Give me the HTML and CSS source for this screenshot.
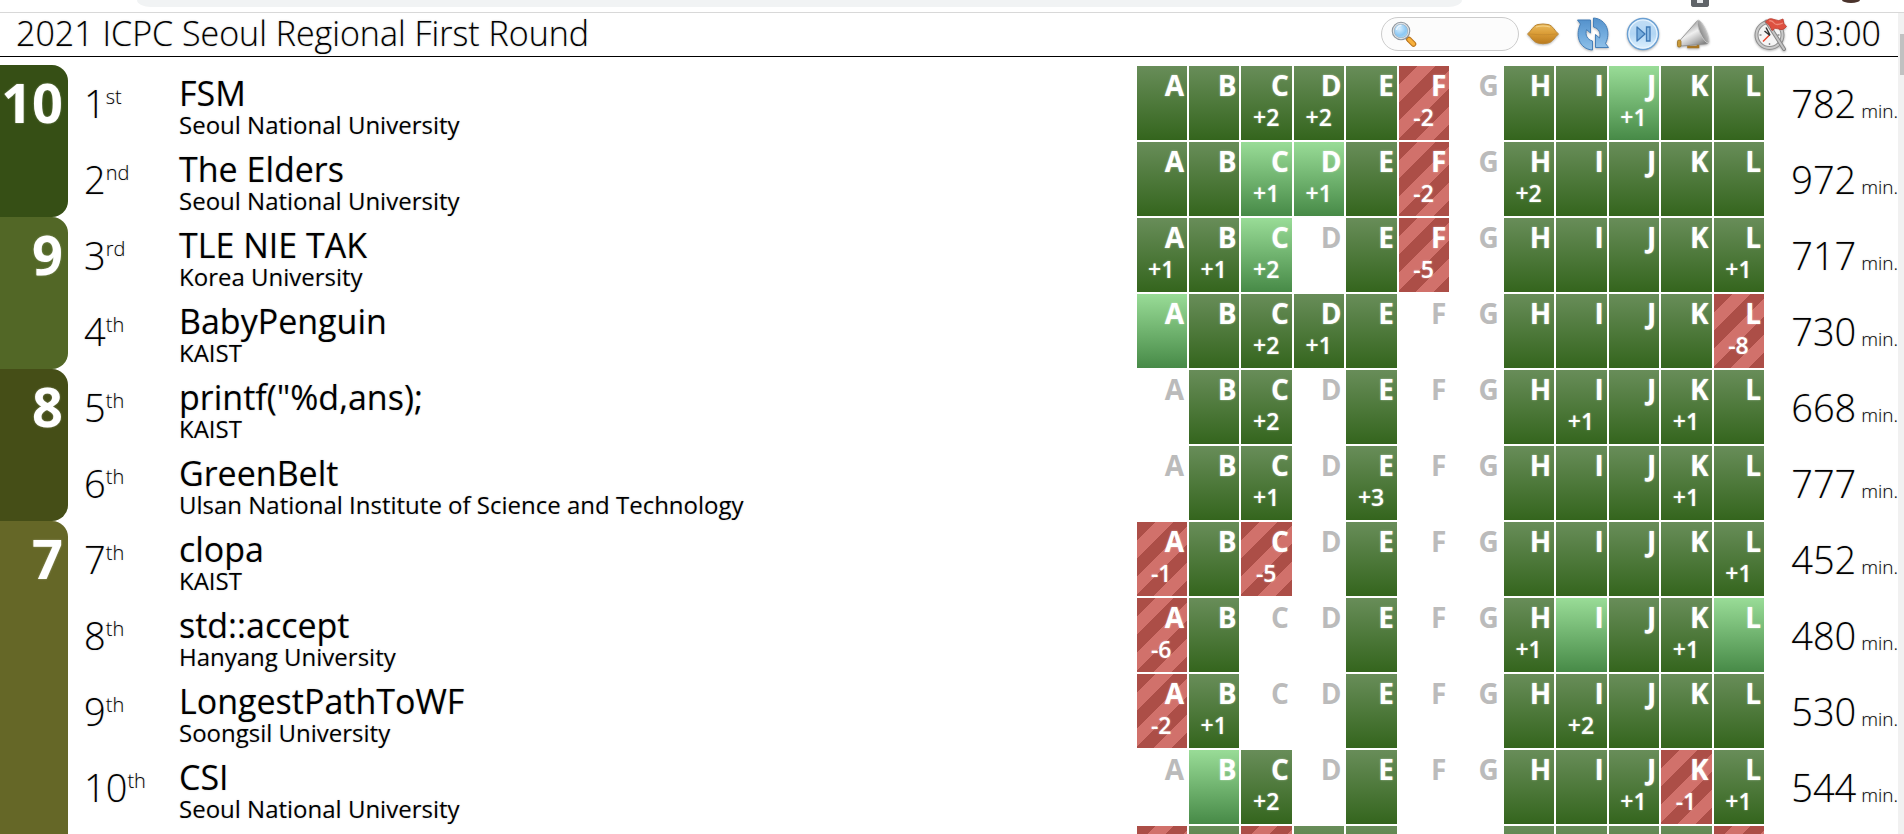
FILE: index.html
```
<!DOCTYPE html>
<html lang="en">
<head>
<meta charset="utf-8">
<title>2021 ICPC Seoul Regional First Round</title>
<link rel="stylesheet" href="styles.css">
</head>
<body>
<div class="browser-edge">
  <div class="omnibox"></div>
  <div class="extension"></div>
  <div class="avatar"></div>
</div>
<div class="viewport">
<main class="page">
<header class="topbar">
  <h1 class="title">2021 ICPC Seoul Regional First Round</h1>
  <label class="search">
    <svg width="26" height="26" viewBox="0 0 26 26" aria-hidden="true">
      <defs><radialGradient id="lens" cx=".4" cy=".35" r=".7"><stop offset="0" stop-color="#d8efff"/><stop offset=".6" stop-color="#8cc8f4"/><stop offset="1" stop-color="#b5def8"/></radialGradient></defs>
      <path d="M15 16l3 3" stroke="#8d8d8d" stroke-width="4"/>
      <path d="M18 18.500l4.500 4.500" stroke="#b9731a" stroke-width="5.500" stroke-linecap="round"/>
      <path d="M18 18.500l4.500 4.500" stroke="#f7b03c" stroke-width="3.500" stroke-linecap="round"/>
      <circle cx="10" cy="10" r="8" fill="url(#lens)" stroke="#8f979f" stroke-width="2.600"/>
      <circle cx="10" cy="10" r="7.600" fill="none" stroke="#dfe3e7" stroke-width="1.200"/>
      <path d="M5.500 9a5 5 0 0 1 5-4.500" fill="none" stroke="#fff" stroke-width="1.500" opacity=".7"/>
    </svg>
    <input class="search-input" type="text" aria-label="Search teams">
  </label>
  <div class="tools">
    <button class="tool" type="button" aria-label="Award">
      <svg width="34" height="34" viewBox="0 0 34 34" aria-hidden="true">
        <defs><linearGradient id="gold" x1="0" y1="0" x2="0" y2="1"><stop offset="0" stop-color="#ecbc5e"/><stop offset=".5" stop-color="#d99b35"/><stop offset="1" stop-color="#b97a1e"/></linearGradient></defs>
        <path d="M1.500 17C5 14.500 7 8.500 12 7.500Q17 6.500 22 7.500C27 8.500 29 14.500 32.500 17C29 19.500 27 25 22 26Q17 27.500 12 26C7 25 5 19.500 1.500 17Z" fill="url(#gold)" stroke="#b98430"/>
        <path d="M3 17Q17 18.500 31 17" fill="none" stroke="#c98e31" stroke-width="1.200"/>
        <path d="M10 10Q17 8 24 10" fill="none" stroke="#f3d28a" stroke-width="1.200"/>
      </svg>
    </button>
    <button class="tool" type="button" aria-label="Reload">
      <svg width="34" height="34" viewBox="0 0 34 34" aria-hidden="true">
        <defs><linearGradient id="blue" x1="0" y1="0" x2="0" y2="1"><stop offset="0" stop-color="#5592cc"/><stop offset=".5" stop-color="#6fa9dc"/><stop offset="1" stop-color="#8fc0e8"/></linearGradient></defs>
        <path d="M1.500 3H14.500V16L10.500 12.500C9 18 11 22.500 16.500 24V33C3 32 -1 18 4.500 7Z" fill="url(#blue)" stroke="#457fb8"/>
        <path d="M32.500 30.500H19.500V17.500L23.500 21C25 16 23 11.500 17.500 10V1C31 2 35 16 29.500 26.500Z" fill="url(#blue)" stroke="#457fb8"/>
      </svg>
    </button>
    <button class="tool" type="button" aria-label="Next">
      <svg width="34" height="34" viewBox="0 0 34 34" aria-hidden="true">
        <defs><linearGradient id="disc" x1="0" y1="0" x2="0" y2="1"><stop offset="0" stop-color="#c3def5"/><stop offset=".5" stop-color="#b2d6f4"/><stop offset="1" stop-color="#e0f2ff"/></linearGradient></defs>
        <circle cx="17" cy="17" r="15.500" fill="url(#disc)" stroke="#6a9fd2" stroke-width="1.400"/>
        <circle cx="17" cy="17" r="14" fill="none" stroke="#eaf5fe" stroke-width="1.200"/>
        <path d="M11 10L19 17L11 24Z" fill="#78aede" stroke="#3f79b5" stroke-width="1.300" stroke-linejoin="round"/>
        <path d="M20.500 10h3.500v14h-3.500Z" fill="#8dbce6" stroke="#3f79b5" stroke-width="1.300"/>
      </svg>
    </button>
    <button class="tool" type="button" aria-label="Announce">
      <svg width="34" height="34" viewBox="0 0 34 34" aria-hidden="true">
        <defs>
          <linearGradient id="horn" x1=".2" y1=".2" x2=".7" y2="1"><stop offset="0" stop-color="#9a9a9a"/><stop offset=".4" stop-color="#f0f0f0"/><stop offset=".75" stop-color="#b5b5b5"/><stop offset="1" stop-color="#808080"/></linearGradient>
          <linearGradient id="bell" x1="0" y1="0" x2="1" y2="0"><stop offset="0" stop-color="#8a8a8a"/><stop offset="1" stop-color="#c0c0c0"/></linearGradient>
        </defs>
        <path d="M12.500 26v4h9.500v-4" fill="none" stroke="#a87624" stroke-width="2.600"/>
        <path d="M3.500 24L21.500 3.500L32.500 25Q32 27 29 27L5 29Z" fill="url(#horn)" stroke="#8c8c8c" stroke-width=".800"/>
        <ellipse cx="27" cy="14.500" rx="3.200" ry="12.500" transform="rotate(-24 27 14.500)" fill="url(#bell)" stroke="#c9c9c9" stroke-width=".800"/>
        <rect x="1.500" y="23" width="3.500" height="7" rx="1.500" fill="#c99a3b" stroke="#99701f" stroke-width=".800"/>
      </svg>
    </button>
  </div>
  <div class="clock">
    <svg width="34" height="34" viewBox="0 0 34 34" aria-hidden="true">
      <circle cx="15.500" cy="18" r="13" fill="#f5f5f5" stroke="#8e8e8e" stroke-width="4"/>
      <circle cx="15.500" cy="18" r="13" fill="none" stroke="#c9c9c9" stroke-width="2"/>
      <path d="M15.500 8v2M15.500 26v2M5.500 18h2M23.500 18h2" stroke="#888" stroke-width="1.400"/>
      <path d="M15.500 18L9 24.500" stroke="#e8442c" stroke-width="1.500"/>
      <path d="M16 18.500L10.500 14M16 18L12 10.500" stroke="#333" stroke-width="1.500"/>
      <path d="M12.500 4.500L30 32" stroke="#868686" stroke-width="4" stroke-linecap="round"/>
      <path d="M12.500 4.500L30 32" stroke="#c4c4c4" stroke-width="2" stroke-linecap="round"/>
      <path d="M11.500 5Q15 0 20 2.500T29 2Q29 7 32.500 9.500Q29 14 25 12T18 13.500Q17 9 11.500 5Z" fill="#dd5040" stroke="#bb3426" stroke-width=".800"/>
      <path d="M15 4Q18 3 20 6T29 6" fill="none" stroke="#f08a7a" stroke-width="1.300"/>
    </svg>
    <time class="clock-time">03:00</time>
  </div>
</header>
<div class="scroll-area">
<table class="board">
<colgroup><col class="c-group"><col class="c-rank"><col class="c-team"><col class="c-prob" span="12"><col class="c-time"></colgroup>
<tbody>
<tr><th class="group g10" scope="rowgroup" rowspan="2">10</th><td class="rank">1<sup>st</sup></td><td class="team"><div class="name">FSM</div><div class="org">Seoul National University</div></td>
<td><div class="p ok"><b>A</b></div></td><td><div class="p ok"><b>B</b></div></td><td><div class="p ok"><b>C</b><i>+2</i></div></td><td><div class="p ok"><b>D</b><i>+2</i></div></td><td><div class="p ok"><b>E</b></div></td><td><div class="p no"><b>F</b><i>-2</i></div></td><td><div class="p"><b>G</b></div></td><td><div class="p ok"><b>H</b></div></td><td><div class="p ok"><b>I</b></div></td><td><div class="p first"><b>J</b><i>+1</i></div></td><td><div class="p ok"><b>K</b></div></td><td><div class="p ok"><b>L</b></div></td>
<td class="time">782 <small>min.</small></td></tr>
<tr><td class="rank">2<sup>nd</sup></td><td class="team"><div class="name">The Elders</div><div class="org">Seoul National University</div></td>
<td><div class="p ok"><b>A</b></div></td><td><div class="p ok"><b>B</b></div></td><td><div class="p first"><b>C</b><i>+1</i></div></td><td><div class="p first"><b>D</b><i>+1</i></div></td><td><div class="p ok"><b>E</b></div></td><td><div class="p no"><b>F</b><i>-2</i></div></td><td><div class="p"><b>G</b></div></td><td><div class="p ok"><b>H</b><i>+2</i></div></td><td><div class="p ok"><b>I</b></div></td><td><div class="p ok"><b>J</b></div></td><td><div class="p ok"><b>K</b></div></td><td><div class="p ok"><b>L</b></div></td>
<td class="time">972 <small>min.</small></td></tr>
<tr><th class="group g9" scope="rowgroup" rowspan="2">9</th><td class="rank">3<sup>rd</sup></td><td class="team"><div class="name">TLE NIE TAK</div><div class="org">Korea University</div></td>
<td><div class="p ok"><b>A</b><i>+1</i></div></td><td><div class="p ok"><b>B</b><i>+1</i></div></td><td><div class="p first"><b>C</b><i>+2</i></div></td><td><div class="p"><b>D</b></div></td><td><div class="p ok"><b>E</b></div></td><td><div class="p no"><b>F</b><i>-5</i></div></td><td><div class="p"><b>G</b></div></td><td><div class="p ok"><b>H</b></div></td><td><div class="p ok"><b>I</b></div></td><td><div class="p ok"><b>J</b></div></td><td><div class="p ok"><b>K</b></div></td><td><div class="p ok"><b>L</b><i>+1</i></div></td>
<td class="time">717 <small>min.</small></td></tr>
<tr><td class="rank">4<sup>th</sup></td><td class="team"><div class="name">BabyPenguin</div><div class="org">KAIST</div></td>
<td><div class="p first"><b>A</b></div></td><td><div class="p ok"><b>B</b></div></td><td><div class="p ok"><b>C</b><i>+2</i></div></td><td><div class="p ok"><b>D</b><i>+1</i></div></td><td><div class="p ok"><b>E</b></div></td><td><div class="p"><b>F</b></div></td><td><div class="p"><b>G</b></div></td><td><div class="p ok"><b>H</b></div></td><td><div class="p ok"><b>I</b></div></td><td><div class="p ok"><b>J</b></div></td><td><div class="p ok"><b>K</b></div></td><td><div class="p no"><b>L</b><i>-8</i></div></td>
<td class="time">730 <small>min.</small></td></tr>
<tr><th class="group g8" scope="rowgroup" rowspan="2">8</th><td class="rank">5<sup>th</sup></td><td class="team"><div class="name">printf("%d,ans);</div><div class="org">KAIST</div></td>
<td><div class="p"><b>A</b></div></td><td><div class="p ok"><b>B</b></div></td><td><div class="p ok"><b>C</b><i>+2</i></div></td><td><div class="p"><b>D</b></div></td><td><div class="p ok"><b>E</b></div></td><td><div class="p"><b>F</b></div></td><td><div class="p"><b>G</b></div></td><td><div class="p ok"><b>H</b></div></td><td><div class="p ok"><b>I</b><i>+1</i></div></td><td><div class="p ok"><b>J</b></div></td><td><div class="p ok"><b>K</b><i>+1</i></div></td><td><div class="p ok"><b>L</b></div></td>
<td class="time">668 <small>min.</small></td></tr>
<tr><td class="rank">6<sup>th</sup></td><td class="team"><div class="name">GreenBelt</div><div class="org">Ulsan National Institute of Science and Technology</div></td>
<td><div class="p"><b>A</b></div></td><td><div class="p ok"><b>B</b></div></td><td><div class="p ok"><b>C</b><i>+1</i></div></td><td><div class="p"><b>D</b></div></td><td><div class="p ok"><b>E</b><i>+3</i></div></td><td><div class="p"><b>F</b></div></td><td><div class="p"><b>G</b></div></td><td><div class="p ok"><b>H</b></div></td><td><div class="p ok"><b>I</b></div></td><td><div class="p ok"><b>J</b></div></td><td><div class="p ok"><b>K</b><i>+1</i></div></td><td><div class="p ok"><b>L</b></div></td>
<td class="time">777 <small>min.</small></td></tr>
<tr><th class="group g7" scope="rowgroup" rowspan="5">7</th><td class="rank">7<sup>th</sup></td><td class="team"><div class="name">clopa</div><div class="org">KAIST</div></td>
<td><div class="p no"><b>A</b><i>-1</i></div></td><td><div class="p ok"><b>B</b></div></td><td><div class="p no"><b>C</b><i>-5</i></div></td><td><div class="p"><b>D</b></div></td><td><div class="p ok"><b>E</b></div></td><td><div class="p"><b>F</b></div></td><td><div class="p"><b>G</b></div></td><td><div class="p ok"><b>H</b></div></td><td><div class="p ok"><b>I</b></div></td><td><div class="p ok"><b>J</b></div></td><td><div class="p ok"><b>K</b></div></td><td><div class="p ok"><b>L</b><i>+1</i></div></td>
<td class="time">452 <small>min.</small></td></tr>
<tr><td class="rank">8<sup>th</sup></td><td class="team"><div class="name">std::accept</div><div class="org">Hanyang University</div></td>
<td><div class="p no"><b>A</b><i>-6</i></div></td><td><div class="p ok"><b>B</b></div></td><td><div class="p"><b>C</b></div></td><td><div class="p"><b>D</b></div></td><td><div class="p ok"><b>E</b></div></td><td><div class="p"><b>F</b></div></td><td><div class="p"><b>G</b></div></td><td><div class="p ok"><b>H</b><i>+1</i></div></td><td><div class="p first"><b>I</b></div></td><td><div class="p ok"><b>J</b></div></td><td><div class="p ok"><b>K</b><i>+1</i></div></td><td><div class="p first"><b>L</b></div></td>
<td class="time">480 <small>min.</small></td></tr>
<tr><td class="rank">9<sup>th</sup></td><td class="team"><div class="name">LongestPathToWF</div><div class="org">Soongsil University</div></td>
<td><div class="p no"><b>A</b><i>-2</i></div></td><td><div class="p ok"><b>B</b><i>+1</i></div></td><td><div class="p"><b>C</b></div></td><td><div class="p"><b>D</b></div></td><td><div class="p ok"><b>E</b></div></td><td><div class="p"><b>F</b></div></td><td><div class="p"><b>G</b></div></td><td><div class="p ok"><b>H</b></div></td><td><div class="p ok"><b>I</b><i>+2</i></div></td><td><div class="p ok"><b>J</b></div></td><td><div class="p ok"><b>K</b></div></td><td><div class="p ok"><b>L</b></div></td>
<td class="time">530 <small>min.</small></td></tr>
<tr><td class="rank">10<sup>th</sup></td><td class="team"><div class="name">CSI</div><div class="org">Seoul National University</div></td>
<td><div class="p"><b>A</b></div></td><td><div class="p first"><b>B</b></div></td><td><div class="p ok"><b>C</b><i>+2</i></div></td><td><div class="p"><b>D</b></div></td><td><div class="p ok"><b>E</b></div></td><td><div class="p"><b>F</b></div></td><td><div class="p"><b>G</b></div></td><td><div class="p ok"><b>H</b></div></td><td><div class="p ok"><b>I</b></div></td><td><div class="p ok"><b>J</b><i>+1</i></div></td><td><div class="p no"><b>K</b><i>-1</i></div></td><td><div class="p ok"><b>L</b><i>+1</i></div></td>
<td class="time">544 <small>min.</small></td></tr>
<tr><td></td><td></td>
<td><div class="p no"></div></td><td><div class="p ok"></div></td><td><div class="p no"></div></td><td><div class="p ok"></div></td><td><div class="p ok"></div></td><td></td><td></td><td><div class="p ok"></div></td><td><div class="p ok"></div></td><td><div class="p ok"></div></td><td><div class="p ok"></div></td><td><div class="p no"></div></td>
<td></td></tr>
</tbody>
</table>
</div>
</main>
<div class="scrollbar"><div class="thumb"></div></div>
</div>
</body>
</html>
```
FILE: styles.css
```
* { box-sizing: border-box; }
body {
  margin: 0;
  height: 100vh;
  overflow: hidden;
  display: flex;
  flex-direction: column;
  background: #fff;
  color: #000;
  font-family: "Open Sans", "Noto Sans", sans-serif;
}

/* bottom edge of the browser toolbar */
.browser-edge {
  flex: none;
  display: flex;
  height: 13px;
  padding: 0 44px 0 137px;
  border-bottom: 1px solid #d8d8d8;
}
.omnibox { flex: 1; height: 7px; background: #f1f3f4; border-radius: 0 0 14px 14px / 0 0 7px 7px; }
.extension { width: 18px; height: 7px; margin-left: 229px; border: solid #5f6368; border-width: 0 6px 4px; border-radius: 0 0 3px 3px; background: #e8eaed; }
.avatar { width: 18px; height: 3px; margin-left: 133px; background: #4a332c; border-radius: 0 0 9px 9px / 0 0 3px 3px; }

.viewport { flex: 1; min-height: 0; display: flex; }
.page { flex: 1; min-width: 0; display: flex; flex-direction: column; }
.scroll-area { flex: 1; min-height: 0; overflow: hidden; }
.scrollbar { flex: none; width: 6px; padding: 21px 0 0 2px; background: #f1f1f1; }
.thumb { height: 41px; background: #c1c1c1; }

.topbar {
  flex: none;
  display: flex;
  align-items: flex-start;
  height: 44px;
  margin-bottom: 8px;
  padding: 0 17px 0 16px;
  border-bottom: 1px solid #000;
}
.title { flex: 1; margin: 0; font-size: 34px; font-weight: 300; line-height: 40px; text-shadow: 0 0 2px #bbb; white-space: nowrap; }
.search {
  display: flex;
  align-items: center;
  width: 138px;
  height: 34px;
  margin-top: 4px;
  padding: 0 12px 0 9px;
  border: 1px solid #ccc;
  border-radius: 17px;
  background: #fcfcfc;
}
.search svg { flex: none; }
.search-input { flex: 1; min-width: 0; border: 0; padding: 0; background: none; font: 400 18px "Open Sans", sans-serif; outline: none; }
.tools { display: flex; gap: 16px; margin: 4px 44px 0 7px; }
.tool { display: block; width: 34px; height: 34px; border: 0; padding: 0; background: none; }
.tool svg, .clock svg { display: block; filter: drop-shadow(0 1px 1px rgba(0, 0, 0, .3)); }
.clock { display: flex; gap: 7px; }
.clock svg { margin-top: 4px; }
.clock-time { font-size: 34px; font-weight: 300; line-height: 40px; text-shadow: 0 0 2px #bbb; }

.board { width: 100%; table-layout: fixed; border-collapse: separate; border-spacing: 0; }
.c-group { width: 68px; }
.c-rank { width: 111px; }
.c-prob { width: 2.765%; }
.c-time { width: 7%; }
.board td, .board th { padding: 0; vertical-align: top; }
.board td { height: 76px; }

.board .group {
  padding: 7px 5px 0 0;
  border-radius: 0 16px 16px 0;
  color: #fff;
  font-size: 54px;
  font-weight: 700;
  line-height: 60px;
  text-align: right;
  text-shadow: 0 0 2px rgba(255, 255, 255, .4);
}
.g10 { background: #364f15; }
.g9 { background: #526726; }
.g8 { background: #454e17; }
.g7 { background: #656727; }

.board .rank { padding: 12px 0 0 16px; font-size: 38px; font-weight: 300; line-height: 52px; text-shadow: 0 0 2px #ccc; }
.rank sup { font-size: 20px; line-height: 0; vertical-align: 14px; }
.board .team { padding: 8px 0 4px; white-space: nowrap; text-shadow: 0 0 2px #ccc; }
.name { font-size: 34px; line-height: 40px; }
.org { font-size: 24px; line-height: 24px; }
.board .time { padding-top: 12px; font-size: 38px; font-weight: 300; line-height: 52px; text-align: right; white-space: nowrap; text-shadow: 0 0 2px #ccc; }
.time small { margin-left: -5px; font-size: 19px; }

.p { height: 74px; margin: 1px; padding: 4px 3px 0; color: #bbb; }
.p b { display: block; font-size: 28px; font-weight: 700; line-height: 30px; text-align: right; }
.p i { display: block; margin-top: 5px; padding-right: 1px; font-size: 23px; font-style: normal; font-weight: 600; line-height: 24px; text-align: center; }
.ok, .first, .no { color: #fff; text-shadow: 0 0 2px rgba(255, 255, 255, .5); }
.ok { background: linear-gradient(#688d59, #34651d); }
.first { background: linear-gradient(#99dc97, #478a47); }
.no { background: linear-gradient(135deg, #ac4e47 25%, #d1716b 25% 50%, #ac4e47 50% 75%, #d1716b 75%) 0 0 / 36px 36px; }
```
